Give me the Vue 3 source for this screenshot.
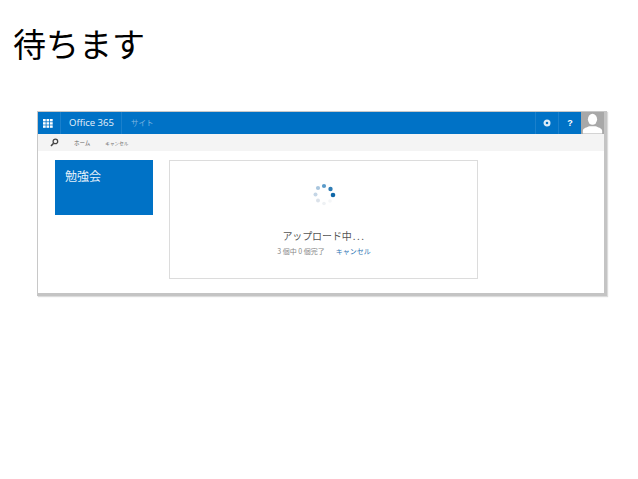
<script setup>
const dots = [
  { cx: 12, cy: 3, r: 2.1, fill: '#5b9bc9' },
  { cx: 18.5, cy: 6, r: 2.2, fill: '#2f7db5' },
  { cx: 21, cy: 12, r: 2.3, fill: '#0f67a8' },
  { cx: 18, cy: 18, r: 1.8, fill: '#f4f6f8' },
  { cx: 12, cy: 20.5, r: 1.8, fill: '#eef1f4' },
  { cx: 6, cy: 17.5, r: 2, fill: '#dbe2ea' },
  { cx: 3.5, cy: 11.5, r: 2, fill: '#c5d6e6' },
  { cx: 6, cy: 5, r: 2.1, fill: '#a9c6de' },
]
</script>

<template>
  <main class="slide">
    <h1 class="title">待ちます</h1>
    <section class="shot">
      <header class="topbar">
        <div class="waffle">
          <svg width="10" height="9" viewBox="0 0 10 9" fill="#fff">
            <rect v-for="n in 9" :key="n" :x="((n - 1) % 3) * 3.5" :y="Math.floor((n - 1) / 3) * 3.2" width="2.7" height="2.4" />
          </svg>
        </div>
        <div class="brand">Office 365</div>
        <div class="site">サイト</div>
        <div class="spacer"></div>
        <div class="tool">
          <svg width="8" height="8" viewBox="0 0 8 8">
            <circle cx="4" cy="4" r="2.4" fill="none" stroke="#dcebf7" stroke-width="2.2" />
          </svg>
        </div>
        <div class="tool help">?</div>
        <div class="avatar">
          <svg width="23" height="22" viewBox="0 0 25 23" fill="#fff">
            <ellipse cx="12.5" cy="7.5" rx="5" ry="6" />
            <path d="M2 23v-3c0-3 5-4 7-5h7c2 1 7 2 7 5v3z" />
          </svg>
        </div>
      </header>
      <nav class="ribbon">
        <svg class="search" width="9" height="9" viewBox="0 0 9 9">
          <circle cx="5.4" cy="3.4" r="2.3" fill="none" stroke="#444" stroke-width="1.3" />
          <path d="M3.6 5.2 1 8" stroke="#444" stroke-width="1.6" />
        </svg>
        <span class="cmd first">ホーム</span>
        <span class="cmd second">キャンセル</span>
      </nav>
      <div class="content">
        <div class="tile">勉強会</div>
        <div class="panel">
          <svg class="spinner" width="24" height="24" viewBox="0 0 24 24">
            <circle v-for="d in dots" :key="d.cx + '-' + d.cy" :cx="d.cx" :cy="d.cy" :r="d.r" :fill="d.fill" />
          </svg>
          <div class="uploading">アップロード中<span class="ellipsis">...</span></div>
          <div class="status">
            <span>3 個中 0 個完了</span>
            <span class="cancel">キャンセル</span>
          </div>
        </div>
      </div>
    </section>
  </main>
</template>

<style>
html, body { margin: 0; background: #fff; }
</style>

<style scoped>
.slide {
  width: 638px;
  height: 479px;
  overflow: hidden;
  box-sizing: border-box;
  padding: 20px 0 0 37px;
  background: #fff;
  font-family: "Noto Sans CJK JP", "Liberation Sans", sans-serif;
}
.title {
  margin: 0 0 44px -24px;
  font-size: 33px;
  line-height: 47px;
  font-weight: 400;
  color: #000;
}
.shot {
  width: 570px;
  height: 185px;
  box-sizing: border-box;
  background: #fff;
  border: 1px solid #c8c8c8;
  border-right: 3px solid #c4c4c4;
  border-bottom: 3px solid #c4c4c4;
  box-shadow: 1px 1px 1px #dcdcdc;
}
.topbar {
  display: flex;
  height: 22px;
  background: #0072c6;
  color: #fff;
  align-items: stretch;
}
.waffle {
  width: 23px;
  box-sizing: border-box;
  padding-right: 3px;
  display: flex;
  align-items: center;
  justify-content: center;
  border-right: 1px solid #1a80cc;
}
.brand {
  width: 61px;
  box-sizing: border-box;
  padding-left: 8px;
  font-family: "Open Sans", "Noto Sans", sans-serif;
  font-size: 9.5px;
  line-height: 22px;
  color: #e6f1fa;
  border-right: 1px solid #1a80cc;
}
.site {
  padding-left: 9px;
  font-size: 7.5px;
  line-height: 22px;
  color: #7fb6e0;
}
.spacer { flex: 1; }
.tool {
  width: 22px;
  display: flex;
  align-items: center;
  justify-content: center;
  border-left: 1px solid #1a80cc;
}
.help {
  font-family: "Liberation Sans", sans-serif;
  font-size: 9px;
  font-weight: 700;
}
.avatar {
  width: 23px;
  background: #a8a8a8;
  display: flex;
  align-items: flex-end;
  overflow: hidden;
}
.ribbon {
  display: flex;
  align-items: center;
  height: 17px;
  background: #f4f4f4;
  color: #666;
  font-size: 5.5px;
}
.search { margin-left: 12px; }
.cmd.first { margin-left: 15px; }
.cmd.second { margin-left: 15px; font-size: 4.6px; }
.content {
  display: flex;
  align-items: flex-start;
  gap: 16px;
  padding: 9px 0 0 17px;
}
.tile {
  width: 98px;
  height: 55px;
  box-sizing: border-box;
  padding: 7px 0 0 10px;
  background: #0072c6;
  color: #e4f0fa;
  font-size: 12px;
  line-height: 18px;
}
.panel {
  width: 309px;
  height: 119px;
  box-sizing: border-box;
  border: 1px solid #dcdcdc;
  display: flex;
  flex-direction: column;
  align-items: center;
  padding-top: 22px;
}
.uploading {
  margin-top: 21px;
  margin-left: 1px;
  font-size: 10px;
  letter-spacing: -0.1px;
  line-height: 16px;
  color: #555;
}
.ellipsis {
  letter-spacing: 1.5px;
  margin-left: 1px;
}
.status {
  display: flex;
  gap: 11px;
  margin-top: 2px;
  margin-left: 1px;
  font-size: 7px;
  line-height: 11px;
  color: #888;
}
.cancel { color: #2f76b5; }
</style>
